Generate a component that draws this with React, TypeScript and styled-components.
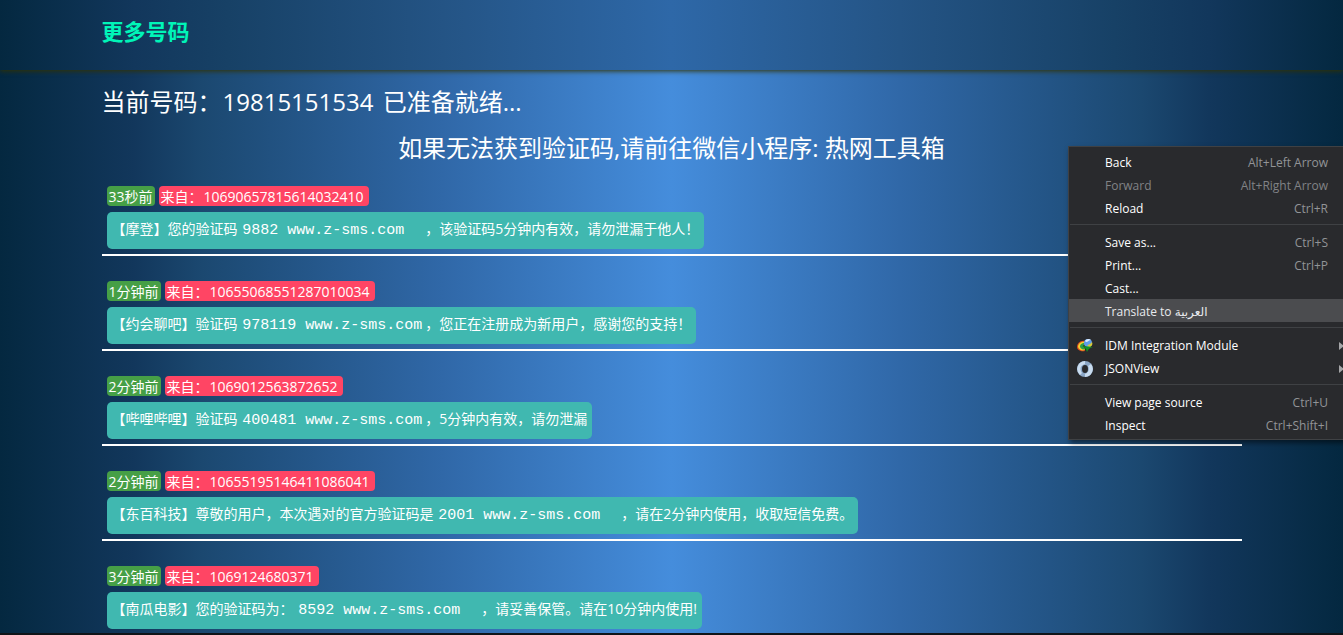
import React from "react";
import styled, { createGlobalStyle, css } from "styled-components";

const Global = createGlobalStyle`
  * { box-sizing: border-box; }
  html, body { margin: 0; height: 100%; overflow: hidden; }
  body {
    color: #fff;
    font: 14px/20px "Open Sans", "Noto Sans CJK SC", sans-serif;
    background: #042840;
  }
`;

const Page = styled.div`
  height: 100vh;
  overflow: hidden;
  border-bottom: 2px solid #101418;
  background: linear-gradient(to right, #042840 0%, #12375c 10%, #1b4870 15%, #3068a8 33%, #458ddc 50%, #3068a8 67%, #1b4870 85%, #12375c 90%, #042840 100%);
`;

const Header = styled.header`
  height: 70px;
  background: linear-gradient(to right, #042840 0%, #12375c 10%, #174166 17%, #245485 33%, #2e68a8 50%, #245485 67%, #174166 83%, #12375c 90%, #042840 100%);
  box-shadow: 0 1px 5px #333300;
`;

const Container = styled.div`
  max-width: 1140px;
  margin: 0 auto;
`;

const Brand = styled.a`
  display: inline-block;
  padding-top: 15px;
  font-size: 22px;
  line-height: 32px;
  font-weight: 700;
  color: #00f5b8;
  text-decoration: none;
`;

const Title = styled.h1<{ $center?: boolean }>`
  margin: 0;
  padding-top: ${(p) => (p.$center ? 10 : 14)}px;
  font-size: 24px;
  line-height: 36px;
  font-weight: 400;
  text-align: ${(p) => (p.$center ? "center" : "left")};
`;

const Digits = styled.span`
  padding: 0 3px 0 1px;
`;

const List = styled.ul`
  list-style: none;
  margin: 0;
  padding: 20px 0 0;
`;

const Item = styled.li`
  height: 70px;
  margin-bottom: 25px;
  padding-left: 5px;
  border-bottom: 2px solid #fff;
`;

const Tags = styled.div`
  display: flex;
  gap: 4px;
  margin-bottom: 6px;
`;

const Tag = styled.span<{ $sender?: boolean }>`
  height: 20px;
  padding: 0 2px;
  border-radius: 4px;
  line-height: 22px;
  white-space: nowrap;
  background: ${(p) => (p.$sender ? "#ff4564" : "#469f46")};
`;

const Message = styled.p`
  display: inline-block;
  margin: 0;
  height: 37px;
  padding: 0 5px;
  border-radius: 5px;
  background: #40b8b0;
  line-height: 34px;
  white-space: pre;
`;

const Code = styled.code`
  padding: 0 3px 0 1px;
  font: 15px/20px "Liberation Mono", monospace;
`;

const Menu = styled.div`
  position: absolute;
  top: 146px;
  right: -8px;
  width: 283px;
  padding: 3px 0;
  border: 1px solid #3f4144;
  background: #292a2d;
  box-shadow: 2px 3px 5px rgba(0, 0, 0, 0.5);
  font: 12px/23px "Open Sans", "Noto Sans", "DejaVu Sans", sans-serif;
`;

const MenuItem = styled.button<{ $active?: boolean }>`
  display: grid;
  grid-template-columns: 28px 1fr auto;
  align-items: center;
  width: 100%;
  height: 23px;
  padding: 1px 22px 0 8px;
  border: 0;
  font: inherit;
  text-align: left;
  color: #fff;
  background: ${(p) => (p.$active ? "#4b4c4f" : "transparent")};
  &:disabled { color: #818386; }
  ${(p) => p.$active && css`color: #e8eaed;`}
`;

const IconSlot = styled.span`
  display: flex;
  align-items: center;
`;

const Shortcut = styled.span`
  color: #929497;
  ${MenuItem}:disabled & { color: #818386; }
`;

const Arrow = styled.svg`
  display: block;
  margin: 0 -17px 0 11px;
`;

const Rule = styled.hr`
  margin: 5px 1px;
  border: 0;
  border-top: 1px solid #3f4144;
`;

type Sms = { ago: string; from: string; before: string; code: string; after: string };

const messages: Sms[] = [
  { ago: "33秒前", from: "10690657815614032410", before: "【摩登】您的验证码 ", code: "9882 www.z-sms.com  ", after: "，该验证码5分钟内有效，请勿泄漏于他人！" },
  { ago: "1分钟前", from: "10655068551287010034", before: "【约会聊吧】验证码 ", code: "978119 www.z-sms.com", after: "，您正在注册成为新用户，感谢您的支持！" },
  { ago: "2分钟前", from: "1069012563872652", before: "【哔哩哔哩】验证码 ", code: "400481 www.z-sms.com", after: "，5分钟内有效，请勿泄漏" },
  { ago: "2分钟前", from: "10655195146411086041", before: "【东百科技】尊敬的用户，本次遇对的官方验证码是 ", code: "2001 www.z-sms.com  ", after: "，请在2分钟内使用，收取短信免费。" },
  { ago: "3分钟前", from: "1069124680371", before: "【南瓜电影】您的验证码为： ", code: "8592 www.z-sms.com  ", after: "，请妥善保管。请在10分钟内使用!" },
];

const IdmIcon = () => (
  <svg width="17" height="16" viewBox="0 0 17 16" aria-hidden="true">
    <path d="M8 3C3 2 0 6 0 9c0 3 4 5 8 4l-1-3C5 10 5 7 8 6z" fill="#d94a20" />
    <path d="M8 4C4 3 1 6 1 9c1 3 4 4 7 3l-1-2C5 9 5 7 8 6z" fill="#f2d22e" />
    <path d="M8 5C4 5 3 7 3 9c1 2 3 3 5 2l-2-2C6 8 6 7 8 6z" fill="#2b9f48" />
    <circle cx="11" cy="5" r="4" fill="#5f9dea" />
    <path d="M8 3c1-2 4-3 6-1-2 0-3 2-5 2z" fill="#dcecff" />
    <path d="M10 8c2-2 4-2 5-4 1 2 0 4-2 5z" fill="#d9c936" />
    <path d="M5 8l11 1-3 1-2 2-1 2-1-3z" fill="#129522" />
  </svg>
);

const JsonIcon = () => (
  <svg width="17" height="16" viewBox="0 0 17 16" aria-hidden="true">
    <circle cx="8" cy="8" r="8" fill="#8ba7c7" />
    <path d="M8 0a8 8 0 0 0-5 14l2-2C2 7 4 4 8 3zM8 16a8 8 0 0 0 6-13l-3 2c2 4 0 7-3 8z" fill="#c9dcef" />
    <ellipse cx="8" cy="8" rx="3" ry="4" fill="#292a2d" />
  </svg>
);

type Entry = { label: string; keys?: string; icon?: React.ReactNode; disabled?: boolean; active?: boolean; sub?: boolean };

const groups: Entry[][] = [
  [
    { label: "Back", keys: "Alt+Left Arrow" },
    { label: "Forward", keys: "Alt+Right Arrow", disabled: true },
    { label: "Reload", keys: "Ctrl+R" },
  ],
  [
    { label: "Save as...", keys: "Ctrl+S" },
    { label: "Print...", keys: "Ctrl+P" },
    { label: "Cast..." },
    { label: "Translate to العربية", active: true },
  ],
  [
    { label: "IDM Integration Module", icon: <IdmIcon />, sub: true },
    { label: "JSONView", icon: <JsonIcon />, sub: true },
  ],
  [
    { label: "View page source", keys: "Ctrl+U" },
    { label: "Inspect", keys: "Ctrl+Shift+I" },
  ],
];

export default function App() {
  return (
    <>
      <Global />
      <Page>
        <Header>
          <Container>
            <Brand href="#">更多号码</Brand>
          </Container>
        </Header>
        <Container as="main">
          <Title>当前号码：<Digits>19815151534</Digits> 已准备就绪...</Title>
          <Title as="h2" $center>如果无法获到验证码,请前往微信小程序: 热网工具箱</Title>
          <List>
            {messages.map((m) => (
              <Item key={m.from}>
                <Tags>
                  <Tag>{m.ago}</Tag>
                  <Tag $sender>来自：<Digits>{m.from}</Digits></Tag>
                </Tags>
                <Message>
                  {m.before}
                  <Code>{m.code}</Code>
                  {m.after}
                </Message>
              </Item>
            ))}
          </List>
        </Container>
      </Page>
      <Menu role="menu">
        {groups.map((group, i) => (
          <React.Fragment key={i}>
            {i > 0 && <Rule />}
            {group.map((e) => (
              <MenuItem key={e.label} role="menuitem" disabled={e.disabled} $active={e.active}>
                <IconSlot>{e.icon}</IconSlot>
                <span>{e.label}</span>
                {e.keys && <Shortcut>{e.keys}</Shortcut>}
                {e.sub && (
                  <Arrow width="6" height="8" viewBox="0 0 6 8" aria-hidden="true">
                    <path d="M0 0l5 4-5 4z" fill="#a5a6a8" />
                  </Arrow>
                )}
              </MenuItem>
            ))}
          </React.Fragment>
        ))}
      </Menu>
    </>
  );
}
